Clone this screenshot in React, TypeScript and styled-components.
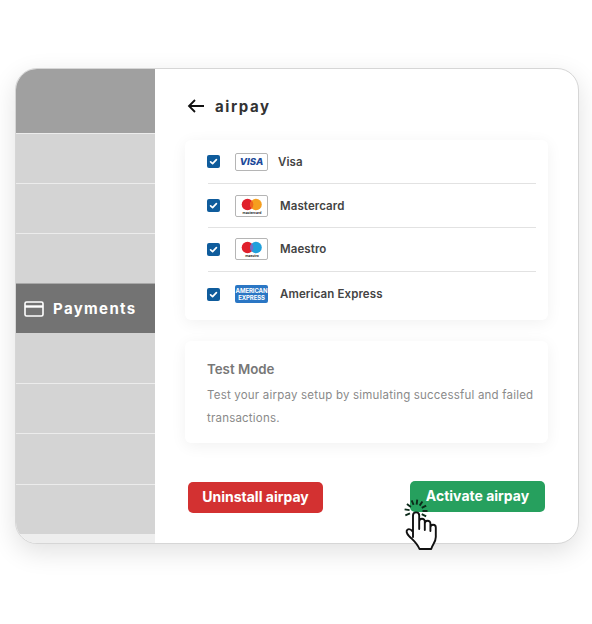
import React from "react";
import styled, { createGlobalStyle } from "styled-components";

const Global = createGlobalStyle`
  html, body { margin: 0; padding: 0; background: #fff; }
  body { font-family: Inter, "Open Sans", "Liberation Sans", sans-serif; width: 592px; height: 624px; overflow: hidden; }
  * { box-sizing: border-box; }
`;

const Page = styled.div`
  padding: 68px 13px 0 15px;
`;

const Frame = styled.div`
  position: relative;
  width: 564px;
  height: 476px;
`;

const Shell = styled.div`
  display: flex;
  width: 100%;
  height: 100%;
  border-radius: 22px;
  overflow: hidden;
  background: #fff;
  border: 1px solid #d6d6d6;
  box-shadow: 0 8px 26px rgba(0, 0, 0, 0.12);
`;

const Side = styled.div`
  width: 139px;
  flex: none;
  display: flex;
  flex-direction: column;
  background: #eeeeee;
  margin-top: -1px;
`;

const SideHead = styled.div`
  height: 65px;
  background: #a0a0a0;
`;

const SideRow = styled.div<{ $h?: number; $plain?: boolean }>`
  height: ${(p) => p.$h ?? 50}px;
  background: #d4d4d4;
  border-top: ${(p) => (p.$plain ? "0" : "1px solid #ececec")};
`;

const SideActive = styled.div`
  height: 50px;
  background: #737373;
  color: #fff;
  display: flex;
  align-items: center;
  gap: 9px;
  padding-left: 8px;
  font-size: 15px;
  font-weight: 700;
  letter-spacing: 1.35px;
  border-top: 1px solid #a8a8a8;
`;

const Main = styled.div`
  flex: 1;
  padding: 26px 30px 0 30px;
  display: flex;
  flex-direction: column;
  min-width: 0;
`;

const Heading = styled.div`
  height: 22px;
  margin-left: 2px;
  display: flex;
  align-items: center;
  gap: 11px;
`;

const Title = styled.h1`
  margin: 0;
  font-size: 15px;
  font-weight: 700;
  letter-spacing: 1.6px;
  color: #333;
`;

const Panel = styled.div`
  background: #fff;
  border-radius: 6px;
  box-shadow: 0 3px 16px rgba(0, 0, 0, 0.06);
`;

const ListPanel = styled(Panel)`
  margin-top: 23px;
  height: 180px;
  padding: 0 12px 0 23px;
`;

const PayRow = styled.div<{ $last?: boolean; $lift?: number }>`
  height: 44px;
  padding-bottom: ${(p) => p.$lift ?? 0}px;
  display: flex;
  align-items: center;
  border-bottom: ${(p) => (p.$last ? "0" : "1px solid #e2e2e2")};
`;

const Check = styled.span`
  width: 13px;
  height: 13px;
  margin-left: -1px;
  margin-right: 15px;
  flex: none;
  border-radius: 2px;
  background: #0f5c9c;
  display: inline-flex;
  align-items: center;
  justify-content: center;
`;

const PayName = styled.span<{ $gap: number }>`
  margin-left: ${(p) => p.$gap}px;
  font-size: 11.5px;
  font-weight: 600;
  color: #444;
  letter-spacing: 0.1px;
`;

const LogoBox = styled.span<{ $h: number }>`
  width: 33px;
  height: ${(p) => p.$h}px;
  flex: none;
  border: 1px solid #b5b5b5;
  border-radius: 2px;
  background: #fff;
  display: inline-flex;
  align-items: center;
  justify-content: center;
`;

const VisaMark = styled.span`
  font-size: 9.5px;
  font-weight: 800;
  font-style: italic;
  color: #1c4a9a;
  line-height: 1;
`;

const AmexBox = styled.span`
  width: 33px;
  height: 18px;
  flex: none;
  border-radius: 2px;
  background: #2a76c4;
  color: #fff;
  font-size: 6px;
  font-weight: 700;
  line-height: 7px;
  display: flex;
  flex-direction: column;
  align-items: center;
  justify-content: center;
  letter-spacing: -0.1px;
`;

const InfoPanel = styled(Panel)`
  margin-top: 21px;
  height: 102px;
  padding: 19px 12px 0 22px;
`;

const InfoTitle = styled.div`
  font-size: 13.3px;
  font-weight: 600;
  line-height: 18px;
  color: #777;
`;

const InfoText = styled.p`
  margin: 6px 0 0;
  font-size: 11.5px;
  line-height: 23px;
  color: #8a8a8a;
  letter-spacing: 0.2px;
`;

const Actions = styled.div`
  margin-top: 38px;
  padding: 0 3px;
  display: flex;
  justify-content: space-between;
  align-items: flex-start;
`;

const Btn = styled.button<{ $bg: string; $top?: number }>`
  width: 135px;
  height: 31px;
  border: 0;
  border-radius: 5px;
  background: ${(p) => p.$bg};
  color: #fff;
  font-family: inherit;
  font-size: 14px;
  font-weight: 700;
  margin-top: ${(p) => p.$top ?? 0}px;
  padding: 0 0 2px;
`;

const HandOverlay = styled.svg`
  position: absolute;
  left: 384px;
  top: 428px;
`;

const CardIcon = () => (
  <svg width="20" height="16" viewBox="0 0 20 16" fill="none" stroke="#fff" strokeWidth="1.6" style={{ flex: "none" }}>
    <rect x="1" y="1" width="18" height="14" rx="1.6" />
    <line x1="1" y1="5.5" x2="19" y2="5.5" strokeWidth="2.4" />
  </svg>
);

const BackArrow = () => (
  <svg width="17" height="14" viewBox="0 0 17 14" fill="none" stroke="#111" strokeWidth="1.8" style={{ flex: "none" }}>
    <path d="M17 7H2M8 1 2 7l6 6" />
  </svg>
);

const Tick = () => (
  <svg width="9" height="9" viewBox="0 0 9 9" fill="none" stroke="#fff" strokeWidth="1.7" strokeLinecap="round" strokeLinejoin="round">
    <path d="M1.6 4.8 3.6 6.6 7.4 2.6" />
  </svg>
);

const Circles = ({ left, right, mid, label }: { left: string; right: string; mid: string; label: string }) => (
  <svg width="26" height="18" viewBox="0 0 26 18">
    <circle cx="8.5" cy="7.5" r="5.8" fill={left} />
    <circle cx="17" cy="7.5" r="5.8" fill={right} />
    <path d="M12.75 3.5a5.8 5.8 0 0 1 0 8 5.8 5.8 0 0 1 0-8z" fill={mid} />
    <text x="13" y="16.5" textAnchor="middle" fontSize="3.4" fontWeight="700" fill="#333" fontFamily="Inter, sans-serif">{label}</text>
  </svg>
);

const Hand = () => {
  const rays = [-172, -142, -112, -84, -56, -28, 0, 28, 158];
  const cx = 17, cy = 15;
  return (
    <HandOverlay width="50" height="60" viewBox="0 0 50 60">
      {rays.map((a) => {
        const r = (a * Math.PI) / 180;
        return (
          <line
            key={a}
            x1={cx + Math.cos(r) * 6.5}
            y1={cy + Math.sin(r) * 6.5}
            x2={cx + Math.cos(r) * 11.5}
            y2={cy + Math.sin(r) * 11.5}
            stroke="#0c2a1a"
            strokeWidth="1.9"
          />
        );
      })}
      <path
        d="M14 41V19.5a3.1 3.1 0 0 1 6.2 0V33V25.5a2.8 2.8 0 0 1 5.6 0V34V27.5a2.8 2.8 0 0 1 5.6 0V35V31.5a2.7 2.7 0 0 1 5.4 0V41c0 5-3 7-4.6 12H20.5C18 47 15 45 10 40c-2.6-2.8-3-5.2-1.6-6.3 1.6-1.2 3.6-.3 5.6 2.3z"
        fill="#fff"
        stroke="#111"
        strokeWidth="1.9"
        strokeLinejoin="round"
      />
    </HandOverlay>
  );
};

export default function App() {
  return (
    <Page>
      <Global />
      <Frame>
        <Shell>
          <Side>
            <SideHead />
            <SideRow />
            <SideRow />
            <SideRow />
            <SideActive>
              <CardIcon />
              Payments
            </SideActive>
            <SideRow $plain />
            <SideRow />
            <SideRow $h={51} />
            <SideRow />
          </Side>
          <Main>
            <Heading>
              <BackArrow />
              <Title>airpay</Title>
            </Heading>
            <ListPanel>
              <PayRow>
                <Check><Tick /></Check>
                <LogoBox $h={18}><VisaMark>VISA</VisaMark></LogoBox>
                <PayName $gap={10}>Visa</PayName>
              </PayRow>
              <PayRow>
                <Check><Tick /></Check>
                <LogoBox $h={22}>
                  <Circles left="#e0202c" right="#f59e1f" mid="#f0651c" label="mastercard" />
                </LogoBox>
                <PayName $gap={12}>Mastercard</PayName>
              </PayRow>
              <PayRow $lift={1}>
                <Check><Tick /></Check>
                <LogoBox $h={22}>
                  <Circles left="#e0202c" right="#1fa0dc" mid="#7a6bc4" label="maestro" />
                </LogoBox>
                <PayName $gap={12}>Maestro</PayName>
              </PayRow>
              <PayRow $last>
                <Check><Tick /></Check>
                <AmexBox><span>AMERICAN</span><span>EXPRESS</span></AmexBox>
                <PayName $gap={12}>American Express</PayName>
              </PayRow>
            </ListPanel>
            <InfoPanel>
              <InfoTitle>Test Mode</InfoTitle>
              <InfoText>Test your airpay setup by simulating successful and failed transactions.</InfoText>
            </InfoPanel>
            <Actions>
              <Btn $bg="#d33131" $top={1}>Uninstall airpay</Btn>
              <Btn $bg="#26a05e">Activate airpay</Btn>
            </Actions>
          </Main>
        </Shell>
        <Hand />
      </Frame>
    </Page>
  );
}
